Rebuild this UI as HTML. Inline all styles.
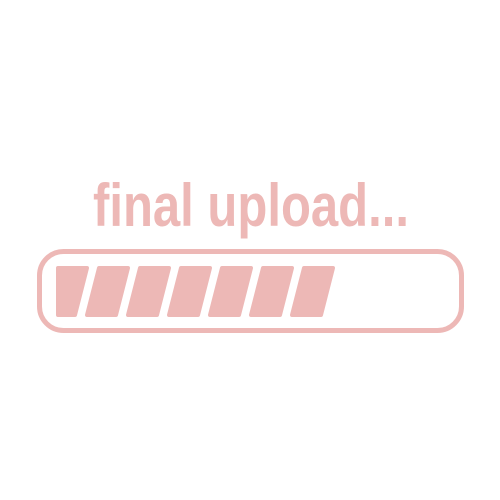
<!DOCTYPE html>
<html><head><style>html,body{margin:0;padding:0;background:#fff;width:500px;height:500px;overflow:hidden}</style></head>
<body>
<svg width="500" height="500" viewBox="0 0 500 500" xmlns="http://www.w3.org/2000/svg">
<text x="93" y="226" font-family="Liberation Sans, sans-serif" font-weight="bold" font-size="60" fill="#edb8b6" textLength="316" lengthAdjust="spacingAndGlyphs">final upload...</text>
<rect x="39.5" y="251.5" width="422" height="79" rx="24" fill="none" stroke="#edb8b6" stroke-width="5"/>
<g fill="#edb8b6" stroke="#edb8b6" stroke-width="4" stroke-linejoin="round">
<path d="M58 268 H87 L75 315 H58 Z"/>
<path d="M99 268 H128 L116 315 H87 Z"/>
<path d="M140 268 H169 L157 315 H128 Z"/>
<path d="M181 268 H210 L198 315 H169 Z"/>
<path d="M222 268 H251 L239 315 H210 Z"/>
<path d="M263 268 H292 L280 315 H251 Z"/>
<path d="M304 268 H333 L321 315 H292 Z"/>
</g>
</svg>
</body></html>
